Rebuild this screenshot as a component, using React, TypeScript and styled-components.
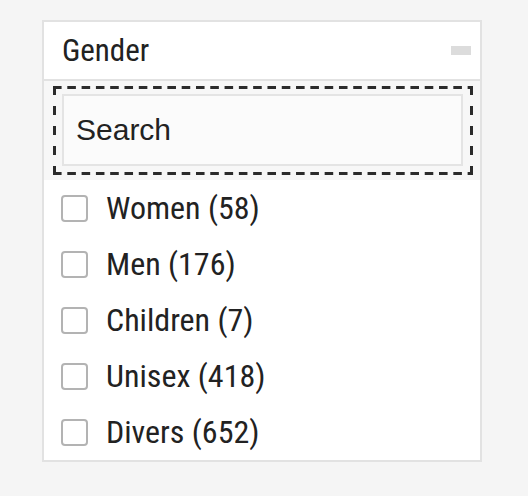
import React from "react";
import styled, { createGlobalStyle } from "styled-components";

const Global = createGlobalStyle`
  html, body { margin: 0; padding: 0; background: #f5f5f5; }
  body { font-family: Roboto, "Noto Sans", sans-serif; }
`;

const Page = styled.div`
  padding: 20px 0 0 42px;
`;

const Panel = styled.section`
  box-sizing: border-box;
  width: 440px;
  height: 442px;
  border: 2px solid #e2e2e2;
  background: #ffffff;
  display: flex;
  flex-direction: column;
`;

const Header = styled.div`
  height: 57px;
  border-bottom: 2px solid #e2e2e2;
  display: flex;
  align-items: center;
  justify-content: space-between;
  padding: 0 9px 0 18px;
  flex-shrink: 0;
`;

const Title = styled.h2`
  margin: 0;
  font-family: Roboto, sans-serif;
  font-weight: 400;
  font-size: 31px;
  font-stretch: 85%;
  color: #222;
  line-height: 1;
`;

const Collapse = styled.span`
  display: block;
  width: 20px;
  height: 9px;
  background: #dcdcdc;
`;

const SearchArea = styled.div`
  background: #f7f7f7;
  padding: 5px 7px 5px 9px;
  flex-shrink: 0;
`;

const dash = "#2b2b2b";

const FocusRing = styled.div`
  padding: 8px 10px 9px 9px;
  background:
    linear-gradient(90deg, ${dash} 8.3px, transparent 8.3px) left top / 14.3px 3px repeat-x,
    linear-gradient(90deg, ${dash} 8.3px, transparent 8.3px) left bottom / 14.3px 3px repeat-x,
    linear-gradient(180deg, ${dash} 9px, transparent 9px) left top / 3px 20px repeat-y,
    linear-gradient(180deg, ${dash} 9px, transparent 9px) right top / 3px 20px repeat-y;
`;

const SearchInput = styled.input`
  box-sizing: border-box;
  display: block;
  width: 100%;
  height: 72px;
  border: 2px solid #e4e4e4;
  background: #fbfbfb;
  padding: 0 12px;
  font-family: "Liberation Sans", Arial, sans-serif;
  font-size: 30px;
  color: #222;
  outline: none;
  &::placeholder { color: #222; opacity: 1; }
`;

const List = styled.ul`
  list-style: none;
  margin: 0;
  padding: 0;
`;

const Row = styled.li`
  height: 56px;
  display: flex;
  align-items: center;
  padding-left: 17px;
  gap: 18px;
`;

const Box = styled.span`
  box-sizing: border-box;
  width: 27px;
  height: 27px;
  border: 2px solid #b3b3b3;
  border-radius: 4px;
  background: #fff;
  flex-shrink: 0;
`;

const Label = styled.span`
  font-family: Roboto, sans-serif;
  font-size: 32px;
  font-stretch: 85%;
  color: #222;
  line-height: 1;
`;

const items = [
  "Women (58)",
  "Men (176)",
  "Children (7)",
  "Unisex (418)",
  "Divers (652)",
];

export default function App() {
  return (
    <Page>
      <Global />
      <Panel>
        <Header>
          <Title>Gender</Title>
          <Collapse />
        </Header>
        <SearchArea>
          <FocusRing>
            <SearchInput placeholder="Search" />
          </FocusRing>
        </SearchArea>
        <List>
          {items.map((t) => (
            <Row key={t}>
              <Box />
              <Label>{t}</Label>
            </Row>
          ))}
        </List>
      </Panel>
    </Page>
  );
}
